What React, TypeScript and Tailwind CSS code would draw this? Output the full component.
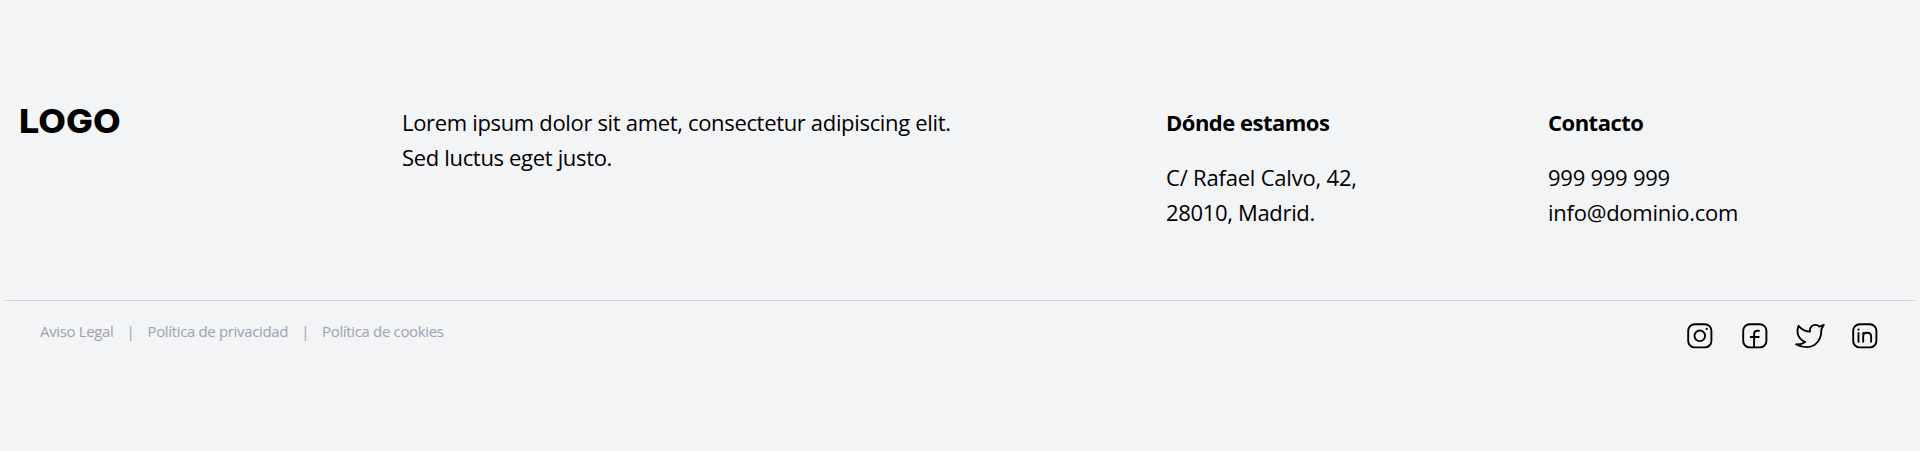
const legal = ['Aviso Legal', 'Política de privacidad', 'Política de cookies'];

function Instagram() {
  return (
    <svg width="26" height="26" viewBox="0 0 26 26" fill="none" stroke="black" strokeWidth="1.9">
      <rect x="1.2" y="1.2" width="23.2" height="23.2" rx="6.5" />
      <circle cx="12.8" cy="12.8" r="5.3" />
      <circle cx="19.7" cy="5.9" r="1.1" fill="black" stroke="none" />
    </svg>
  );
}

function Facebook() {
  return (
    <svg width="26" height="26" viewBox="0 0 26 26" fill="none" stroke="black" strokeWidth="1.9" strokeLinecap="round">
      <rect x="1.2" y="1.2" width="23.2" height="23.2" rx="6.5" />
      <path d="M17 7.800h-1.400c-2.200 0-3.500 1.300-3.500 3.400v13M8.600 14h8.200" />
    </svg>
  );
}

function Twitter() {
  return (
    <svg width="30" height="26" viewBox="0 0 30 26" fill="none" stroke="black" strokeWidth="1.9" strokeLinecap="round" strokeLinejoin="round">
      <path d="M3.6 2.8c3 3.500 6.400 5.600 11.300 5.800C14.500 4.500 17 1.900 20.500 1.900c1.700 0 2.700.6 3.800 1.700l4.500-1.700-2.500 4.500c.4 10-5.600 17.700-14.300 17.700-3.800 0-7.600-1-10.800-2.800 3.500.2 6.300-.4 8.900-2.400C3.600 16.200.8 9.900 3.600 2.800Z" />
    </svg>
  );
}

function Linkedin() {
  return (
    <svg width="26" height="26" viewBox="0 0 26 26" fill="none" stroke="black" strokeWidth="1.9" strokeLinecap="round">
      <rect x="1.2" y="1.2" width="23.2" height="23.2" rx="6.5" />
      <path d="M6.500 10v8.800M11.200 10v8.800M11.200 13.200c0-2 1.600-3.400 3.900-3.400s4 1.400 4 3.600v5.400" />
      <circle cx="6.500" cy="6.600" r="1.1" fill="black" stroke="none" />
    </svg>
  );
}

export default function App() {
  return (
    <footer className="h-[451px] bg-[#f3f4f6] px-[5px] pt-[105px] font-['Open_Sans',sans-serif] text-black">
      <div className="grid h-[195px] grid-cols-5 text-[22px] leading-[35px] tracking-[-0.33px]">
        <div className="origin-left scale-x-[1.085] px-[13px] pt-px font-['Inter',sans-serif] text-[33px] leading-[31px] font-extrabold tracking-[0px]">LOGO</div>
        <p className="col-span-2 px-[15px] whitespace-nowrap">
          Lorem ipsum dolor sit amet, consectetur adipiscing elit.
          <br />
          Sed luctus eget justo.
        </p>
        <div className="px-[15px]">
          <h2 className="mb-5 font-bold tracking-[-0.5px]">Dónde estamos</h2>
          <p className="tracking-[-0.2px]">C/ Rafael Calvo, 42,</p>
          <p>28010, Madrid.</p>
        </div>
        <div className="px-[15px]">
          <h2 className="mb-5 font-bold tracking-[-0.5px]">Contacto</h2>
          <p className="tracking-[-0.25px]">999 999 999</p>
          <p className="tracking-[-0.25px]">info@dominio.com</p>
        </div>
      </div>
      <div className="flex items-start justify-between border-t border-[#d1d5db] pr-[37px] pl-[35px]">
        <nav className="flex pt-[19px] text-[15px] leading-[22px] tracking-[-0.35px] text-[#9ca3af]">
          {legal.map((item, i) => (
            <span key={item} className="flex">
              {i > 0 && <span className="w-[34px] text-center">|</span>}
              <a href="#">{item}</a>
            </span>
          ))}
        </nav>
        <div className="flex pt-[22px]">
          <a href="#" aria-label="Instagram" className="mr-[29px]"><Instagram /></a>
          <a href="#" aria-label="Facebook" className="mr-[27px]"><Facebook /></a>
          <a href="#" aria-label="Twitter" className="mr-[27px]"><Twitter /></a>
          <a href="#" aria-label="LinkedIn"><Linkedin /></a>
        </div>
      </div>
    </footer>
  );
}
